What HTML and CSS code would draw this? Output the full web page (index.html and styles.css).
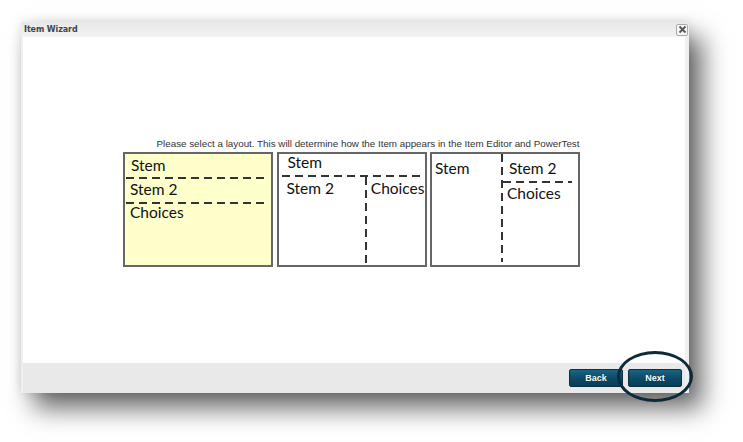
FILE: index.html
```html
<!DOCTYPE html>
<html>
<head>
<meta charset="utf-8">
<link rel="stylesheet" href="styles.css">
</head>
<body>
<div class="dialog">
  <div class="titlebar">
    <span class="title">Item Wizard</span>
    <span class="close"><svg width="9" height="9" viewBox="0 0 9 9"><path d="M1.5 1.5L7.5 7.5M7.5 1.5L1.5 7.5" stroke="#555" stroke-width="1.8"/></svg></span>
  </div>
  <div class="content">
    <p class="prompt">Please select a layout. This will determine how the Item appears in the Item Editor and PowerTest</p>
    <div class="layouts">
      <div class="layout l1 selected">
        <div class="cell c1a">Stem</div>
        <div class="hdash"></div>
        <div class="cell c1b">Stem 2</div>
        <div class="hdash"></div>
        <div class="cell c1c">Choices</div>
      </div>
      <div class="layout l2">
        <div class="cell c2a">Stem</div>
        <div class="hdash h2"></div>
        <div class="row2">
          <div class="cell c2b">Stem 2</div>
          <div class="vdash v2"></div>
          <div class="cell c2c">Choices</div>
        </div>
      </div>
      <div class="layout l3">
        <div class="cell c3a">Stem</div>
        <div class="vdash v3"></div>
        <div class="col3">
          <div class="cell c3b">Stem 2</div>
          <div class="hdash h3"></div>
          <div class="cell c3c">Choices</div>
        </div>
      </div>
    </div>
  </div>
  <div class="footer">
    <button class="btn">Back</button>
    <button class="btn next">Next</button>
  </div>
  <div class="ring"></div>
</div>
</body>
</html>
```
FILE: styles.css
```css
html, body {
  margin: 0;
  padding: 0;
  background: #fff;
}
body {
  width: 743px;
  height: 442px;
  overflow: hidden;
  padding-top: 22px;
  padding-left: 21px;
  box-sizing: border-box;
}
.dialog {
  position: relative;
  width: 668px;
  height: 371px;
  box-sizing: border-box;
  background: #efefef;
  padding: 0 4px 0 2px;
  display: flex;
  flex-direction: column;
  box-shadow: 0 0 10px rgba(0,0,0,0.10), 13px 15px 24px rgba(0,0,0,0.6);
}
.titlebar {
  height: 15px;
  display: flex;
  align-items: center;
  justify-content: space-between;
  background: linear-gradient(#e8e8e8, #f3f3f3);
  margin: 0 -4px 0 -2px;
  padding: 0 1px 0 3px;
}
.title {
  font-family: "DejaVu Sans", sans-serif;
  font-weight: bold;
  font-size: 8px;
  color: #444;
  letter-spacing: -0.1px;
}
.close {
  width: 10px;
  height: 10px;
  border: 1px solid #aaa;
  border-radius: 2px;
  background: #f7f7f7;
  display: flex;
  align-items: center;
  justify-content: center;
}
.content {
  height: 326px;
  background: #fff;
  display: flex;
  flex-direction: column;
  align-items: center;
  padding-top: 101px;
  box-sizing: border-box;
}
.prompt {
  margin: 0 0 3px 0;
  font-family: "Liberation Sans", Arial, sans-serif;
  font-size: 9.8px;
  color: #333;
  line-height: 11px;
  position: relative;
  left: 14px;
}
.layouts {
  display: flex;
  gap: 3.5px;
  position: relative;
  left: -2.5px;
}
.layout {
  width: 150px;
  height: 115px;
  box-sizing: border-box;
  border: 2px solid #666;
  background: #fff;
  font-family: Lato, "Noto Sans", sans-serif;
  font-size: 15.5px;
  color: #111;
  display: flex;
}
.layout.selected {
  background: #ffffcc;
}
.cell {
  line-height: 20px;
}
.l1 {
  flex-direction: column;
  padding: 0 3px 0 0;
}
.l1 .hdash {
  margin-left: 1px;
}
.c1a { height: 23px; padding: 1px 0 0 6px; box-sizing: border-box; }
.c1b { height: 23px; padding: 0 0 0 5px; box-sizing: border-box; }
.c1c { padding: 0 0 0 5px; margin-top: -2px; }
.hdash {
  height: 2px;
  flex: none;
  background: repeating-linear-gradient(90deg, #333 0 8px, transparent 8px 13px);
}
.vdash {
  width: 2px;
  flex: none;
  background: repeating-linear-gradient(180deg, #333 0 8px, transparent 8px 13px);
}
.l2 {
  flex-direction: column;
}
.c2a { height: 22px; padding: 0 0 0 9px; margin-top: -2px; box-sizing: border-box; }
.h2 { margin-left: 3px; margin-top: 1px; }
.row2 {
  flex: 1;
  display: flex;
}
.c2b { width: 90px; padding: 1px 0 0 8px; box-sizing: border-box; }
.c2c { padding: 1px 0 0 4px; }
.l3 {
  flex-direction: row;
}
.c3a { width: 69px; padding: 4px 0 0 3px; box-sizing: border-box; }
.v3 { margin: 0 0 3px 0; }
.col3 {
  flex: 1;
  display: flex;
  flex-direction: column;
  padding-right: 6px;
}
.c3b { height: 27px; padding: 4px 0 0 6px; box-sizing: border-box; }
.c3c { padding: 0 0 0 4px; }
.footer {
  flex: 1;
  background: #e9e9e9;
  display: flex;
  justify-content: flex-end;
  align-items: flex-start;
  gap: 5px;
  padding: 6px 3px 0 0;
}
.btn {
  width: 54px;
  height: 18px;
  padding: 0;
  border: 1px solid #0a3247;
  border-radius: 2px;
  background: linear-gradient(#1a6483, #0c4a66 55%, #083d56);
  color: #fff;
  font-family: "Liberation Sans", Arial, sans-serif;
  font-weight: bold;
  font-size: 9px;
  text-shadow: 0 0 1px rgba(0,0,0,0.5);
}
.ring {
  position: absolute;
  left: 596px;
  top: 329px;
  width: 70px;
  height: 45px;
  border: 3.5px solid #0d2a3b;
  border-radius: 50%;
}
```
